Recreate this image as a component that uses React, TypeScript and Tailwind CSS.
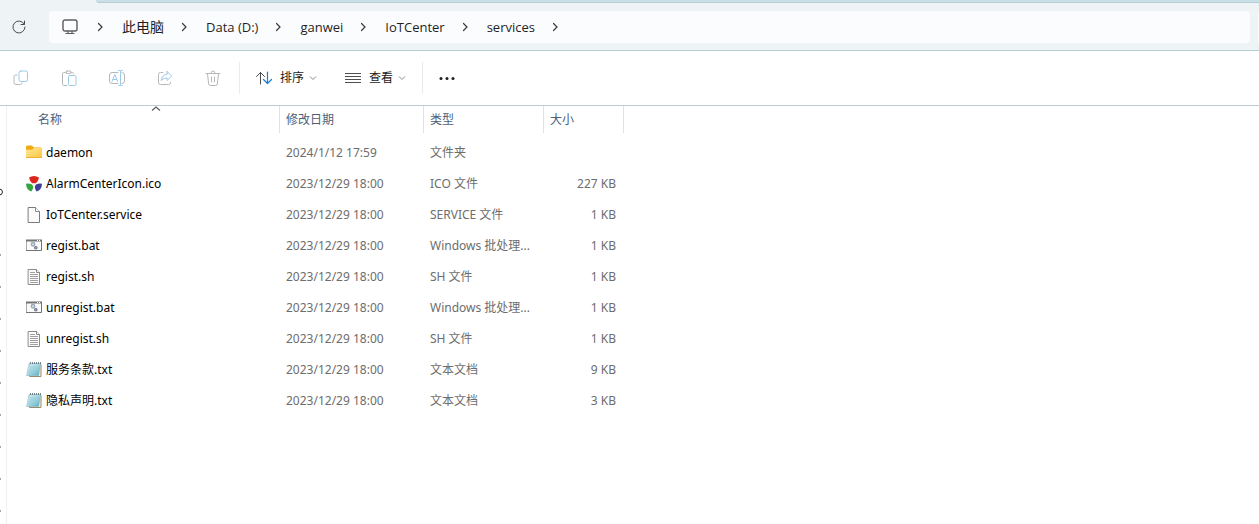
import React from "react";

type FileKind = "folder" | "ico" | "blank" | "bat" | "sh" | "txt";

interface FileEntry {
  name: string;
  date: string;
  type: string;
  size: string;
  kind: FileKind;
}

const files: FileEntry[] = [
  { name: "daemon", date: "2024/1/12 17:59", type: "文件夹", size: "", kind: "folder" },
  { name: "AlarmCenterIcon.ico", date: "2023/12/29 18:00", type: "ICO 文件", size: "227 KB", kind: "ico" },
  { name: "IoTCenter.service", date: "2023/12/29 18:00", type: "SERVICE 文件", size: "1 KB", kind: "blank" },
  { name: "regist.bat", date: "2023/12/29 18:00", type: "Windows 批处理...", size: "1 KB", kind: "bat" },
  { name: "regist.sh", date: "2023/12/29 18:00", type: "SH 文件", size: "1 KB", kind: "sh" },
  { name: "unregist.bat", date: "2023/12/29 18:00", type: "Windows 批处理...", size: "1 KB", kind: "bat" },
  { name: "unregist.sh", date: "2023/12/29 18:00", type: "SH 文件", size: "1 KB", kind: "sh" },
  { name: "服务条款.txt", date: "2023/12/29 18:00", type: "文本文档", size: "9 KB", kind: "txt" },
  { name: "隐私声明.txt", date: "2023/12/29 18:00", type: "文本文档", size: "3 KB", kind: "txt" },
];

const crumbs = ["Data (D:)", "ganwei", "IoTCenter", "services"];

// Tree arrows of the narrow navigation pane
const treeItems = [0, 1, 2, 3, 4, 5, 6, 7, 8];

const Svg: React.FC<{ children: React.ReactNode; className?: string }> = ({ children, className = "" }) => (
  <svg
    width="16"
    height="16"
    viewBox="0 0 16 16"
    fill="none"
    strokeLinecap="round"
    strokeLinejoin="round"
    aria-hidden="true"
    className={`block shrink-0 ${className}`}>
    {children}
  </svg>
);

const FileIcon: React.FC<{ kind: FileKind }> = ({ kind }) => {
  switch (kind) {
    case "folder":
      return (
        <Svg>
          <defs>
            <linearGradient id="folder" x1="0" y1="0" x2="1" y2="1">
              <stop offset="0" stopColor="#ffe69a" />
              <stop offset="1" stopColor="#fdc63c" />
            </linearGradient>
          </defs>
          <path d="M0 2Q0 .5 1.500.5H5.600L8 2.500h6.500Q16 2.500 16 4V10H0Z" fill="#f2a90d" />
          <path d="M0 4.800H6L8 3h6.800Q16 3 16 4.200v7.600Q16 13 14.800 13H1.200Q0 13 0 11.800Z" fill="url(#folder)" />
          <path d="M.5 12.500h15" stroke="#eeb02d" strokeWidth="1" />
        </Svg>
      );
    case "ico":
      return (
        <Svg>
          <path d="M3 1.500Q8-1.500 13 1.500Q12.500 5 9.800 7.200H6.200Q3.500 5 3 1.500Z" fill="#dc251c" />
          <path d="M0 7.800Q3 7 6 8.500L7.200 10.500Q7.200 13.500 5.400 15.500Q.3 14 0 7.800Z" fill="#36a63c" />
          <path d="M16 7.800Q13 7 10 8.500L8.800 10.500Q8.800 13.500 10.600 15.500Q15.700 14 16 7.800Z" fill="#3c3f93" />
          <circle cx="8" cy="8.500" r="1" fill="#e9e9ef" />
        </Svg>
      );
    case "blank":
      return (
        <Svg>
          <path d="M2.500.5h7l4 4v11h-11Z" fill="#fbfbfb" stroke="#7c7c7c" />
          <path d="M9.500.5v4h4" fill="#fff" stroke="#8c8c8c" />
        </Svg>
      );
    case "bat":
      return (
        <Svg>
          <rect x=".5" y="2.500" width="15" height="10" fill="#fafbfc" stroke="#73756f" />
          <path d="M0 2.500h16" stroke="#73756f" strokeWidth="2" strokeLinecap="butt" />
          <path d="M11 2.500h1M13 2.500h1" stroke="#fff" strokeLinecap="butt" />
          <circle cx="7" cy="6.200" r="1.700" stroke="#9dabba" strokeWidth="1.500" fill="#dce6ef" />
          <circle cx="9.800" cy="9.800" r="1.200" stroke="#68727e" strokeWidth="1.200" fill="#e5e9ed" />
        </Svg>
      );
    case "sh":
      return (
        <Svg>
          <path d="M2.500.5h8l3 3v12h-11Z" fill="#fbfbfb" stroke="#8a8a8a" />
          <path d="M10.500.5v3h3" stroke="#8a8a8a" fill="#fff" />
          <path
            d="M4 3.500h5M4 5.500h8M4 7.500h8M4 9.500h8M4 11.500h8M4 13.500h8"
            stroke="#a0a0a0"
            strokeLinecap="butt"
          />
        </Svg>
      );
    case "txt":
      return (
        <Svg>
          <defs>
            <linearGradient id="notepad" x1="0" y1="0" x2="1" y2="1">
              <stop offset="0" stopColor="#d5eef3" />
              <stop offset=".55" stopColor="#9dd4e0" />
              <stop offset="1" stopColor="#4fa9bd" />
            </linearGradient>
          </defs>
          <path d="M4 2.500h11v12H4Z" fill="#f5f1e6" stroke="#9a8a68" />
          <path d="M3.500 1.500h11L12.700 13.500H1Z" fill="url(#notepad)" stroke="#7cb4c1" strokeWidth=".6" />
          <path d="M4 5h9M3.700 7h9M3.300 9h9M3 11h9" stroke="#8cc6d3" strokeWidth=".5" />
          <path d="M4 1h11" stroke="#56666e" strokeWidth="1.300" strokeDasharray="1 1" strokeLinecap="butt" />
        </Svg>
      );
  }
};

const CrumbArrow: React.FC = () => (
  <span className="flex w-[42px] shrink-0 justify-center">
    <Svg>
      <path d="M5.500 4.500 9 8l-3.500 3.500" stroke="#3a3a3a" strokeWidth="1.200" />
    </Svg>
  </span>
);

const Crumb: React.FC<{ label: string }> = ({ label }) => (
  <>
    <button type="button" className="shrink-0 whitespace-nowrap text-[13px] leading-5">
      {label}
    </button>
    <CrumbArrow />
  </>
);

const SmallChevron: React.FC = () => (
  <svg width="8" height="8" viewBox="0 0 8 8" fill="none" aria-hidden="true" className="block">
    <path d="M1 2.500 4 5.500l3-3" stroke="#8a8a8a" />
  </svg>
);

const ToolButton: React.FC<{ label: string; children: React.ReactNode }> = ({ label, children }) => (
  <button type="button" disabled aria-label={label} className="flex h-8 w-12 shrink-0 items-center justify-center">
    <Svg>{children}</Svg>
  </button>
);

const HeaderCell: React.FC<{ label: string; sorted?: boolean }> = ({ label, sorted }) => (
  <th scope="col" className={`pb-1 font-normal ${sorted ? "pl-[25px]" : ""}`}>
    <button
      type="button"
      className="relative flex h-[27px] w-full items-center border-r border-[#e2e2e2] pl-1.5 text-xs text-[#4c607a]">
      {label}
      {sorted && (
        <svg
          width="10"
          height="6"
          viewBox="0 0 10 6"
          fill="none"
          aria-hidden="true"
          className="absolute left-1/2 top-0 -translate-x-1/2">
          <path d="M1 4.500 5 1l4 3.500" stroke="#5c5c5c" strokeWidth="1.200" />
        </svg>
      )}
    </button>
  </th>
);

const App: React.FC = () => {
  return (
    <div className="flex min-h-screen flex-col bg-white font-['Noto_Sans','Noto_Sans_CJK_SC',sans-serif]">
      {/* Tab strip */}
      <div className="flex h-[3px] bg-[#eef4f6]">
        <div className="w-24 shrink-0" />
        <div className="grow rounded-bl border-b border-[#b4ced8] bg-[#cbdfe7]" />
      </div>

      {/* Address bar */}
      <header className="flex items-center overflow-hidden border-b border-[#b7cfd7] bg-[#eef4f6] pb-[7px] pt-2">
        <button type="button" aria-label="刷新" className="mr-[22px] shrink-0 pl-[11px]">
          <Svg>
            <path d="M13.200 5A6 6 0 1 0 14 8M13.500 2v3.500H10" stroke="#4a4a4a" />
          </Svg>
        </button>
        <nav
          aria-label="地址"
          className="flex h-8 min-w-0 grow items-center rounded bg-[#fbfcfe] pl-[13px] font-['Open_Sans','Noto_Sans_CJK_SC',sans-serif] text-[#1f1f1f]">
          <button type="button" aria-label="桌面" className="w-[18px] shrink-0">
            <Svg>
              <rect x="1" y="1" width="14" height="11" rx="2" stroke="#5d5d5d" strokeWidth="1.400" />
              <path d="M6 12.500v2M10 12.500v2M4 14.500h8" stroke="#5d5d5d" strokeWidth="1.200" />
            </Svg>
          </button>
          <CrumbArrow />
          <button type="button" className="shrink-0 whitespace-nowrap text-sm leading-5">
            此电脑
          </button>
          <CrumbArrow />
          {crumbs.map((label) => (
            <Crumb key={label} label={label} />
          ))}
        </nav>
        <div className="ml-2 h-8 w-px shrink-0 bg-[#fbfcfe]" />
      </header>

      {/* Command bar */}
      <div className="flex h-[55px] items-center border-b border-[#bccbd4] text-xs text-[#1a1a1a]">
        <div className="-ml-[3px] flex">
          <ToolButton label="复制">
            <path d="M4 5H2.500Q1 5 1 6.500v6Q1 14.500 3 14.500h4.500Q9 14.500 9 13" stroke="#b8b8b8" />
            <rect x="6" y="1" width="8.500" height="10.500" rx="1.800" stroke="#9ccaeb" />
          </ToolButton>
          <ToolButton label="粘贴">
            <path d="M5 2.500H2.500Q1.500 2.500 1.500 3.500v11q0 1 1 1H6M10 2.500h1.500q1 0 1 1V4" stroke="#b8b8b8" />
            <rect x="4.800" y="1" width="5.400" height="2.500" rx="1.200" stroke="#b8b8b8" />
            <rect x="7.500" y="5.500" width="7.500" height="10" rx="1.200" stroke="#9ccaeb" />
          </ToolButton>
          <ToolButton label="重命名">
            <path
              d="M9 2.500H3Q.5 2.500.5 5v6q0 2.500 2.500 2.500h6M13 2.500q2.500 0 2.500 2.500v6q0 2.500-2.500 2.500"
              stroke="#b8b8b8"
            />
            <path
              d="M3 11.500 5.800 4.500l2.800 7M4 9.500h3.600M11.500 1v14M9.500.5h1q1 0 1 1 0-1 1-1h1M9.500 15.500h1q1 0 1-1 0 1 1 1h1"
              stroke="#9ccaeb"
            />
          </ToolButton>
          <ToolButton label="共享">
            <path d="M6 2.500H3.500q-2 0-2 2v8q0 2 2 2h8q2 0 2-2V12" stroke="#b8b8b8" />
            <path d="M10 1.500 14.800 6 10 10.500V8Q6.500 7.800 4.300 10.500 5 4.500 10 4Z" stroke="#9ccaeb" />
          </ToolButton>
          <ToolButton label="删除">
            <path
              d="M1 3.500h14M6 3Q6 1 8 1t2 2M2.500 4l1.200 10q.2 1.500 1.500 1.500h5.600q1.300 0 1.500-1.500L13.500 4M6.500 7v5M9.500 7v5"
              stroke="#b8b8b8"
            />
          </ToolButton>
        </div>
        <div className="ml-0.5 h-8 w-px shrink-0 bg-[#ebebeb]" />
        <button type="button" className="ml-4 flex shrink-0 items-center">
          <Svg className="mr-2">
            <path d="M4.500 14V2.500M.5 6.500l4-4 4 4" stroke="#4a4a4a" />
            <path d="M11.500 2v11.500M7.500 9.500l4 4 4-4" stroke="#1a7fd0" strokeWidth="1.200" />
          </Svg>
          排序
          <span className="ml-[5px]">
            <SmallChevron />
          </span>
        </button>
        <button type="button" className="ml-7 flex shrink-0 items-center">
          <Svg className="mr-2">
            <path d="M0 3.500h16M0 6.500h16M0 9.500h16M0 12.500h16" stroke="#4f4f4f" strokeLinecap="butt" />
          </Svg>
          查看
          <span className="ml-[5px]">
            <SmallChevron />
          </span>
        </button>
        <div className="ml-4 h-8 w-px shrink-0 bg-[#ebebeb]" />
        <button type="button" aria-label="查看更多" className="ml-4 shrink-0">
          <Svg>
            <circle cx="2" cy="8.500" r="1.500" fill="#1f1f1f" />
            <circle cx="8" cy="8.500" r="1.500" fill="#1f1f1f" />
            <circle cx="14" cy="8.500" r="1.500" fill="#1f1f1f" />
          </Svg>
        </button>
      </div>

      <div className="flex grow">
        {/* Navigation pane, collapsed */}
        <aside className="flex w-[7px] shrink-0 flex-col gap-[30px] border-r border-[#f0f0f0] pt-[82px]">
          <svg width="4" height="8" viewBox="0 0 4 8" fill="none" aria-hidden="true" className="mb-7 block">
            <path d="M-1 1Q2.500 1 2.500 4T-1 7" stroke="#2b2b2b" />
          </svg>
          {treeItems.map((item) => (
            <div key={item} className="h-0.5 w-px bg-[#a6a6a6]" />
          ))}
        </aside>

        <main className="min-w-0 grow">
          <table className="w-[617px] table-fixed border-collapse text-left text-xs">
            <colgroup>
              <col className="w-[273px]" />
              <col className="w-36" />
              <col className="w-[120px]" />
              <col className="w-20" />
            </colgroup>
            <thead>
              <tr>
                <HeaderCell label="名称" sorted />
                <HeaderCell label="修改日期" />
                <HeaderCell label="类型" />
                <HeaderCell label="大小" />
              </tr>
            </thead>
            <tbody>
              {files.map((file) => (
                <tr key={file.name} className="h-[31px] text-[#6d6d6d]">
                  <td className="pl-[19px]">
                    <div className="flex items-center gap-1 text-black">
                      <FileIcon kind={file.kind} />
                      {file.name}
                    </div>
                  </td>
                  <td className="pl-1.5">{file.date}</td>
                  <td className="whitespace-nowrap pl-1.5">{file.type}</td>
                  <td className="pr-2 text-right">{file.size}</td>
                </tr>
              ))}
            </tbody>
          </table>
        </main>
      </div>
    </div>
  );
};

export default App;
